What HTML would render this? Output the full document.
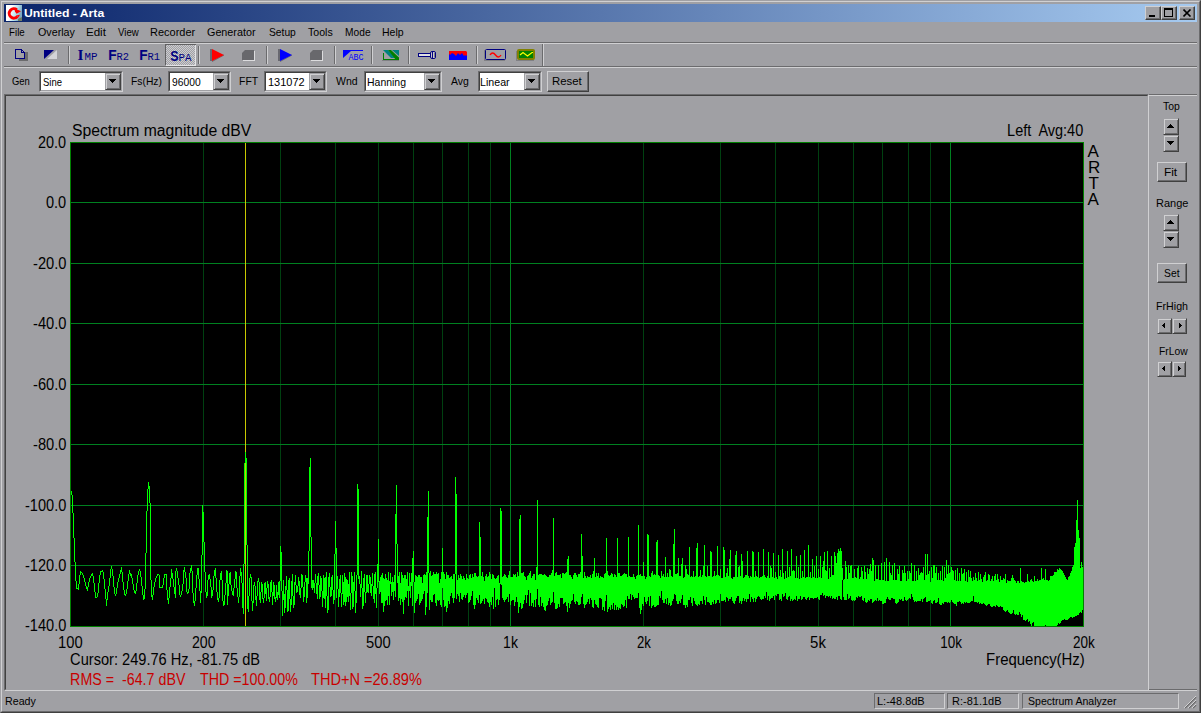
<!DOCTYPE html>
<html><head><meta charset="utf-8"><title>Untitled - Arta</title>
<style>
html,body{margin:0;padding:0}
body{width:1201px;height:713px;background:#a0a0a4;overflow:hidden;position:relative;font-family:"Liberation Sans",sans-serif;font-size:11px;color:#000}
.a{position:absolute}
.t{position:absolute;white-space:pre;line-height:13px;height:13px}
.p{position:absolute;white-space:pre;font-size:15px;line-height:17px;height:17px}
.hl{background:#d0d0d2}.sh{background:#6b6b6d}.dk{background:#404040}
.btn{position:absolute;box-sizing:border-box;background:#a0a0a4;border:1px solid;border-color:#d0d0d2 #404040 #404040 #d0d0d2;box-shadow:inset -1px -1px 0 #6b6b6d}
.sb{position:absolute;box-sizing:border-box;background:#a0a0a4;border:1px solid;border-color:#a0a0a4 #404040 #404040 #a0a0a4;box-shadow:inset 1px 1px 0 #d0d0d2,inset -1px -1px 0 #6b6b6d}
.sb svg,.btn svg{position:absolute;display:block}
.combo{position:absolute;box-sizing:border-box;height:21px;top:71px;border:1px solid;border-color:#6b6b6d #d0d0d2 #d0d0d2 #6b6b6d;background:#fff}
.combo:before{content:"";position:absolute;left:0;top:0;right:0;bottom:0;border:1px solid;border-color:#404040 #a0a0a4 #a0a0a4 #404040}
.cb{right:1px;top:1px;width:16px;height:17px}
.vsep{position:absolute;top:46px;width:1px;height:18px;background:#6b6b6d;box-shadow:1px 0 0 #d0d0d2}
.pane{position:absolute;top:693px;height:16px;box-sizing:border-box;border:1px solid;border-color:#6b6b6d #d0d0d2 #d0d0d2 #6b6b6d}
</style></head><body>
<!-- window frame -->
<div class="a" style="left:0;top:0;width:1201px;height:713px;box-sizing:border-box;border:1px solid;border-color:#a0a0a4 #404040 #404040 #a0a0a4"></div>
<div class="a" style="left:1px;top:1px;width:1199px;height:711px;box-sizing:border-box;border:1px solid;border-color:#d0d0d2 #6b6b6d #6b6b6d #d0d0d2"></div>
<!-- title bar -->
<div class="a" style="left:4px;top:4px;width:1193px;height:18px;background:linear-gradient(90deg,#0a246a,#a6caf0)"></div>
<svg class="a" style="left:6px;top:5px" width="16" height="16" viewBox="0 0 16 16"><defs><linearGradient id="ig" x1="0" y1="0" x2="1" y2="0.300"><stop offset="0.350" stop-color="#fff"/><stop offset="0.700" stop-color="#b8e4f0"/><stop offset="1" stop-color="#7fa8c0"/></linearGradient></defs><rect width="16" height="16" fill="url(#ig)"/><path d="M12 14l4-2v4h-4z" fill="#6a6a40" opacity="0.700"/><path d="M10.800 4.700A4.700 4.700 0 1 0 11.400 11.600" stroke="#f00" stroke-width="3" fill="none"/><path d="M8.500 3.200L15 6.300 10.500 8.800 9 6.500z" fill="#f00"/><path d="M10 10.500l4-.8-1.500 2.500z" fill="#f00"/></svg>

<div class="btn" style="left:1145px;top:6px;width:16px;height:14px"><div class="a" style="left:3px;top:8px;width:6px;height:2px;background:#000"></div></div>
<div class="btn" style="left:1161px;top:6px;width:16px;height:14px"><div class="a" style="left:2px;top:1px;width:9px;height:9px;box-sizing:border-box;border:1px solid #000;border-top-width:2px"></div></div>
<div class="btn" style="left:1179px;top:6px;width:16px;height:14px"><svg class="a" style="left:3px;top:2px" width="9" height="8" viewBox="0 0 9 8"><path d="M0.5 0.5L7.5 7.500M7.500 0.500L0.500 7.500" stroke="#000" stroke-width="1.6" fill="none"/></svg></div>
<!-- menu -->










<div class="a sh" style="left:4px;top:42px;width:1193px;height:1px"></div>
<div class="a hl" style="left:4px;top:43px;width:1193px;height:1px"></div>
<!-- toolbar 1 -->
<div class="a sh" style="left:4px;top:66px;width:1193px;height:1px"></div>
<div class="a hl" style="left:4px;top:67px;width:1193px;height:1px"></div>
<div class="vsep" style="left:68px"></div>
<div class="vsep" style="left:198px"></div>
<div class="vsep" style="left:266px"></div>
<div class="vsep" style="left:334px"></div>
<div class="vsep" style="left:371px"></div>
<div class="vsep" style="left:408px"></div>
<div class="vsep" style="left:476px"></div>
<div class="vsep" style="left:542px;top:44px;height:22px"></div>
<svg class="a" style="left:4px;top:44px" width="560" height="22" viewBox="4 44 560 22" shape-rendering="crispEdges">
<defs><pattern id="dith" width="2" height="2" patternUnits="userSpaceOnUse"><rect width="2" height="2" fill="#a0a0a4"/><rect width="1" height="1" fill="#ccccd0"/><rect x="1" y="1" width="1" height="1" fill="#ccccd0"/></pattern></defs>
<!-- new doc -->
<rect x="19" y="52" width="9" height="9" fill="#6b6b6d"/>
<path d="M15.500 49.500h6l3 3v6h-9z" fill="#a0a0a4" stroke="#000080"/><path d="M21.500 49.500v3h3" fill="none" stroke="#000080"/>
<!-- triangles -->
<path d="M44 50h10l-10 9z" fill="#000080" shape-rendering="auto"/><path d="M57 50v9h-10z" fill="#d4d4d8" shape-rendering="auto"/>
<!-- pressed SPA -->
<rect x="166" y="45" width="29" height="20" fill="url(#dith)"/>
<path d="M165.500 65v-20.500h30" fill="none" stroke="#606062"/><path d="M166 65.500h29.500v-21" fill="none" stroke="#e4e4e6"/>
<!-- red play -->
<path d="M210 49h2v12h-2z" fill="#686870"/><path d="M212 61v1l12-6.500v-1z" fill="#686870" shape-rendering="auto"/><path d="M212 49l12 6-12 6z" fill="#f00" shape-rendering="auto"/>
<!-- stop -->
<path d="M245 50h9v10h-12v-7z" fill="#68686c" shape-rendering="auto"/><path d="M254.500 51v9.500h-12" fill="none" stroke="#dcdcde"/>
<!-- blue play -->
<path d="M278 49h2v12h-2z" fill="#686870"/><path d="M280 61v1l12-6.500v-1z" fill="#686870" shape-rendering="auto"/><path d="M280 49l12 6-12 6z" fill="#00f" shape-rendering="auto"/>
<!-- stop2 -->
<path d="M313 50h9v10h-12v-7z" fill="#68686c" shape-rendering="auto"/><path d="M322.500 51v9.500h-12" fill="none" stroke="#dcdcde"/>
<!-- ABC -->
<path d="M343 50h20v1h-12l-8 7z" fill="#00f" shape-rendering="auto"/>
<text x="348.500" y="60" font-family="Liberation Mono, monospace" font-size="8.500" fill="#00f" textLength="15" lengthAdjust="spacingAndGlyphs">ABC</text>
<!-- green/teal -->
<path d="M382 60.500h17" stroke="#808084"/>
<path d="M383 50h5l8 8h-5z" fill="#008080" shape-rendering="auto"/><path d="M392 50h7v6z" fill="#008080" shape-rendering="auto"/>
<path d="M388 50h3l8 7.500v2.500h-3z" fill="#008000" shape-rendering="auto"/>
<path d="M383.500 53v6.500h15.500" fill="none" stroke="#008000"/>
<!-- flashlight -->
<path d="M418.500 53.500h12v3h-12z" fill="#e0e0e0" stroke="#000080"/><rect x="430.500" y="51.500" width="5" height="7" rx="1.500" fill="#c8c8cc" stroke="#000080" shape-rendering="auto"/><path d="M432.500 52v6" stroke="#000080"/><path d="M434 53v4" stroke="#808084"/>
<!-- red/blue -->
<rect x="449" y="52" width="18" height="8" fill="#00f"/><path d="M450 51h16l1 1v3l-1 1-1-1-1 1-2-3-2 2-2-2-2 3-2-2-2-1-2 2-1-1v-3z" fill="#f00" shape-rendering="auto"/>
<!-- scope 1 -->
<path d="M484.500 50v10.500h20" fill="none" stroke="#808084"/>
<rect x="485.500" y="49.500" width="20" height="10" rx="1" fill="#a0a0a4" stroke="#000080" shape-rendering="auto"/><path d="M490 55q2.500-4 5.500 0t5.500 0" fill="none" stroke="#f00" stroke-width="1.400" shape-rendering="auto"/>
<!-- scope 2 -->
<path d="M516.500 51v9.500h17" fill="none" stroke="#808084"/>
<rect x="517" y="49" width="18" height="11" rx="2" fill="#808000" shape-rendering="auto"/><rect x="519" y="51" width="14" height="7" fill="#008000"/><path d="M520 55l3-2.500 4.500 3.500 4.500-3.500 1 0" fill="none" stroke="#ff0" stroke-width="1.200" shape-rendering="auto"/>
<!-- text icons -->
<g fill="#000080" font-weight="bold" shape-rendering="auto">
<text x="77.500" y="60" font-family="Liberation Serif, serif" font-size="15.500" textLength="6" lengthAdjust="spacingAndGlyphs">I</text>
<text x="108.200" y="60" font-family="Liberation Sans, sans-serif" font-size="15.300" textLength="8.400" lengthAdjust="spacingAndGlyphs">F</text>
<text x="139.200" y="60" font-family="Liberation Sans, sans-serif" font-size="15.300" textLength="8.400" lengthAdjust="spacingAndGlyphs">F</text>
<text x="170.300" y="61" font-family="Liberation Sans, sans-serif" font-size="15.300" textLength="8.300" lengthAdjust="spacingAndGlyphs">S</text>
</g>
<g fill="#000080" font-family="Liberation Mono, monospace" font-size="10" shape-rendering="auto">
<text x="84.500" y="60" textLength="13" lengthAdjust="spacingAndGlyphs">MP</text>
<text x="116.500" y="60" textLength="12.500" lengthAdjust="spacingAndGlyphs">R2</text>
<text x="147.500" y="60" textLength="12.500" lengthAdjust="spacingAndGlyphs">R1</text>
<text x="178.500" y="61" textLength="13" lengthAdjust="spacingAndGlyphs">PA</text>
</g>
</svg>
<!-- toolbar 2 -->

<div class="combo" style="left:39px;width:84px"><div class="sb cb"><svg width="7" height="4" viewBox="0 0 7 4" shape-rendering="crispEdges" style="left:3px;top:5px"><path d="M0 0h7v1h-7zM1 1h5v1h-5zM2 2h3v1h-3zM3 3h1v1h-1z"/></svg></div></div>

<div class="combo" style="left:168px;width:63px"><div class="sb cb"><svg width="7" height="4" viewBox="0 0 7 4" shape-rendering="crispEdges" style="left:3px;top:5px"><path d="M0 0h7v1h-7zM1 1h5v1h-5zM2 2h3v1h-3zM3 3h1v1h-1z"/></svg></div></div>

<div class="combo" style="left:264px;width:63px"><div class="sb cb"><svg width="7" height="4" viewBox="0 0 7 4" shape-rendering="crispEdges" style="left:3px;top:5px"><path d="M0 0h7v1h-7zM1 1h5v1h-5zM2 2h3v1h-3zM3 3h1v1h-1z"/></svg></div></div>

<div class="combo" style="left:364px;width:78px"><div class="sb cb"><svg width="7" height="4" viewBox="0 0 7 4" shape-rendering="crispEdges" style="left:3px;top:5px"><path d="M0 0h7v1h-7zM1 1h5v1h-5zM2 2h3v1h-3zM3 3h1v1h-1z"/></svg></div></div>

<div class="combo" style="left:478px;width:64px"><div class="sb cb"><svg width="7" height="4" viewBox="0 0 7 4" shape-rendering="crispEdges" style="left:3px;top:5px"><path d="M0 0h7v1h-7zM1 1h5v1h-5zM2 2h3v1h-3zM3 3h1v1h-1z"/></svg></div></div>
<div class="btn" style="left:547px;top:71px;width:42px;height:21px"></div>
<!-- client area -->
<div class="a" style="left:4px;top:94px;width:1145px;height:597px;box-sizing:border-box;border:1px solid;border-color:#6b6b6d #d0d0d2 #d0d0d2 #6b6b6d"></div>
<div class="a" style="left:5px;top:95px;width:1143px;height:595px;box-sizing:border-box;border:1px solid;border-color:#404040 #a0a0a4 #a0a0a4 #404040"></div>
<div class="a sh" style="left:1149px;top:94px;width:48px;height:1px"></div><div class="a hl" style="left:1149px;top:95px;width:48px;height:1px"></div>
<div class="a sh" style="left:1149px;top:689px;width:48px;height:1px"></div>
<div class="a hl" style="left:1149px;top:690px;width:48px;height:1px"></div>
<!-- plot -->
<svg class="a" style="left:0;top:0" width="1201" height="713" viewBox="0 0 1201 713" shape-rendering="crispEdges">
<rect x="70.500" y="142.500" width="1013" height="484" fill="#000" stroke="#008000"/>
<path d="M203.5 143V626M280.5 143V626M335.5 143V626M378.5 143V626M413.5 143V626M442.5 143V626M468.5 143V626M490.5 143V626M643.5 143V626M720.5 143V626M775.5 143V626M818.5 143V626M853.5 143V626M882.5 143V626M908.5 143V626M930.5 143V626" stroke="#004010" fill="none"/>
<path d="M71 202.5H1083M71 263.5H1083M71 323.5H1083M71 384.5H1083M71 444.5H1083M71 505.5H1083M71 565.5H1083M510.5 143V626M950.5 143V626" stroke="#008020" fill="none"/>
<path d="M245.500 143V626" stroke="#c8c800" fill="none"/>
<path d="M71.5 491V495M72.5 495V513M73.5 513V538M74.5 538V562M75.5 562V581M76.5 581V589M77.5 588V589M78.5 584V590M79.5 575V584M80.5 571V575M81.5 572V573M82.5 573V575M83.5 575V578M84.5 578V582M85.5 582V586M86.5 586V589M87.5 587V591M88.5 582V587M89.5 578V582M90.5 576V578M91.5 574V576M92.5 573V576M93.5 576V583M94.5 583V592M95.5 592V598M96.5 597V598M97.5 593V597M98.5 583V593M99.5 575V583M100.5 571V575M101.5 571V572M102.5 570V572M103.5 572V579M104.5 579V589M105.5 589V599M106.5 599V606M107.5 592V600M108.5 586V592M109.5 578V586M110.5 569V578M111.5 566V569M112.5 569V576M113.5 576V587M114.5 587V594M115.5 594V596M116.5 588V594M117.5 582V588M118.5 578V582M119.5 574V578M120.5 570V574M121.5 567V572M122.5 572V582M123.5 582V590M124.5 590V595M125.5 594V596M126.5 589V594M127.5 581V589M128.5 574V581M129.5 570V574M130.5 573V576M131.5 574V578M132.5 578V584M133.5 584V590M134.5 590V593M135.5 591V594M136.5 583V591M137.5 575V583M138.5 571V575M139.5 569V571M140.5 571V577M141.5 577V586M142.5 586V595M143.5 595V600M144.5 589V599M145.5 553V589M146.5 511V553M147.5 489V511M148.5 482V489M149.5 486V503M150.5 503V580M151.5 580V597M152.5 595V600M153.5 587V595M154.5 582V587M155.5 578V582M156.5 576V578M157.5 574V576M158.5 574V575M159.5 575V588M160.5 587V588M161.5 587V588M162.5 585V588M163.5 578V585M164.5 574V578M165.5 574V575M166.5 574V590M167.5 590V600M168.5 598V604M169.5 587V598M170.5 578V587M171.5 569V578M172.5 573V579M173.5 579V587M174.5 587V594M175.5 571V598M176.5 568V571M177.5 571V578M178.5 578V585M179.5 585V595M180.5 595V597M181.5 591V595M182.5 584V591M183.5 570V584M184.5 567V572M185.5 572V578M186.5 578V592M187.5 592V594M188.5 589V593M189.5 573V589M190.5 568V573M191.5 565V571M192.5 571V593M193.5 593V603M194.5 601V606M195.5 588V601M196.5 575V588M197.5 568V575M198.5 568V579M199.5 579V591M200.5 591V603M201.5 555V593M202.5 505V555M203.5 512V542M204.5 542V572M205.5 572V592M206.5 592V598M207.5 580V596M208.5 575V580M209.5 574V579M210.5 579V587M211.5 587V598M212.5 590V596M213.5 576V590M214.5 570V576M215.5 568V578M216.5 578V592M217.5 592V600M218.5 598V602M219.5 580V598M220.5 573V580M221.5 571V580M222.5 580V601M223.5 601V606M224.5 595V605M225.5 583V595M226.5 570V583M227.5 571V605M228.5 584V596M229.5 573V584M230.5 572V585M231.5 585V591M232.5 591V595M233.5 588V596M234.5 579V588M235.5 571V579M236.5 572V588M237.5 588V597M238.5 597V603M239.5 576V597M240.5 568V576M241.5 572V583M242.5 583V608M243.5 564V614M244.5 463V564M245.5 452V463M246.5 458V545M247.5 545V609M248.5 596V612M249.5 578V596M250.5 574V578M251.5 577V601M252.5 601V611M253.5 585V603M254.5 582V586M255.5 586V600M256.5 596V606M257.5 581V596M258.5 578V582M259.5 582V600M260.5 592V603M261.5 582V592M262.5 584V599M263.5 598V603M264.5 583V598M265.5 582V594M266.5 588V601M267.5 581V588M268.5 584V599M269.5 597V602M270.5 582V597M271.5 580V592M272.5 592V605M273.5 582V596M274.5 585V599M275.5 597V602M276.5 585V598M277.5 592V600M278.5 582V595M279.5 581V598M280.5 546V581M281.5 552V591M282.5 591V616M283.5 580V600M284.5 594V613M285.5 586V608M286.5 576V590M287.5 590V612M288.5 580V611M289.5 578V599M290.5 599V612M291.5 581V605M292.5 574V596M293.5 596V608M294.5 582V605M295.5 575V585M296.5 585V593M297.5 586V592M298.5 577V586M299.5 581V595M300.5 588V598M301.5 574V588M302.5 575V587M303.5 587V602M304.5 582V597M305.5 575V582M306.5 578V603M307.5 578V598M308.5 551V584M309.5 467V551M310.5 458V537M311.5 537V588M312.5 580V590M313.5 580V588M314.5 583V593M315.5 574V583M316.5 583V594M317.5 576V599M318.5 573V585M319.5 585V599M320.5 576V597M321.5 578V591M322.5 591V607M323.5 575V598M324.5 578V599M325.5 577V608M326.5 572V596M327.5 596V613M328.5 577V610M329.5 573V587M330.5 587V597M331.5 577V596M332.5 575V590M333.5 590V604M334.5 554V600M335.5 521V554M336.5 548V598M337.5 576V589M338.5 589V607M339.5 579V597M340.5 575V593M341.5 593V607M342.5 575V594M343.5 582V605M344.5 573V602M345.5 577V606M346.5 579V602M347.5 580V597M348.5 584V602M349.5 572V596M350.5 593V610M351.5 572V593M352.5 576V609M353.5 582V607M354.5 572V591M355.5 591V613M356.5 575V603M357.5 484V575M358.5 489V579M359.5 576V584M360.5 584V597M361.5 571V588M362.5 588V609M363.5 578V606M364.5 574V592M365.5 592V603M366.5 575V593M367.5 575V592M368.5 584V593M369.5 575V584M370.5 577V593M371.5 584V596M372.5 573V586M373.5 586V599M374.5 574V603M375.5 572V594M376.5 588V608M377.5 564V588M378.5 539V582M379.5 581V594M380.5 577V592M381.5 575V603M382.5 573V603M383.5 578V612M384.5 579V606M385.5 574V601M386.5 578V600M387.5 580V605M388.5 572V596M389.5 581V605M390.5 573V584M391.5 582V596M392.5 577V592M393.5 582V600M394.5 575V591M395.5 514V597M396.5 485V544M397.5 544V583M398.5 576V601M399.5 572V598M400.5 583V605M401.5 572V599M402.5 575V602M403.5 578V614M404.5 575V600M405.5 575V597M406.5 579V598M407.5 572V591M408.5 586V606M409.5 573V591M410.5 582V598M411.5 573V586M412.5 558V606M413.5 551V582M414.5 582V613M415.5 575V603M416.5 576V601M417.5 577V599M418.5 575V594M419.5 575V605M420.5 577V603M421.5 577V601M422.5 583V599M423.5 575V594M424.5 574V591M425.5 575V615M426.5 572V607M427.5 517V593M428.5 491V573M429.5 573V610M430.5 571V600M431.5 576V602M432.5 575V602M433.5 572V595M434.5 574V594M435.5 574V603M436.5 572V606M437.5 574V600M438.5 573V601M439.5 583V600M440.5 579V605M441.5 572V607M442.5 548V588M443.5 572V600M444.5 574V607M445.5 579V606M446.5 572V612M447.5 575V608M448.5 575V601M449.5 578V604M450.5 577V596M451.5 576V593M452.5 579V598M453.5 574V603M454.5 574V598M455.5 477V574M456.5 494V599M457.5 580V594M458.5 575V596M459.5 578V602M460.5 574V593M461.5 576V599M462.5 579V600M463.5 576V597M464.5 578V595M465.5 580V598M466.5 574V595M467.5 578V593M468.5 579V603M469.5 575V602M470.5 574V600M471.5 578V596M472.5 574V591M473.5 577V605M474.5 573V609M475.5 573V605M476.5 576V598M477.5 577V600M478.5 576V603M479.5 522V595M480.5 537V604M481.5 576V603M482.5 572V601M483.5 577V599M484.5 581V604M485.5 576V598M486.5 574V599M487.5 577V602M488.5 576V603M489.5 572V607M490.5 574V602M491.5 579V605M492.5 574V597M493.5 575V609M494.5 578V588M495.5 579V607M496.5 578V600M497.5 576V599M498.5 575V605M499.5 583V600M500.5 508V584M501.5 511V585M502.5 577V598M503.5 576V600M504.5 574V602M505.5 575V600M506.5 577V599M507.5 578V597M508.5 575V602M509.5 571V594M510.5 577V605M511.5 577V601M512.5 577V600M513.5 574V600M514.5 575V606M515.5 574V602M516.5 577V597M517.5 572V602M518.5 576V613M519.5 519V607M520.5 515V603M521.5 573V609M522.5 573V608M523.5 572V604M524.5 576V600M525.5 577V595M526.5 580V603M527.5 576V595M528.5 575V590M529.5 573V606M530.5 571V593M531.5 578V606M532.5 576V603M533.5 574V607M534.5 574V600M535.5 580V607M536.5 567V599M537.5 500V589M538.5 575V605M539.5 574V607M540.5 574V597M541.5 574V606M542.5 575V603M543.5 575V607M544.5 574V610M545.5 575V611M546.5 576V606M547.5 577V605M548.5 577V601M549.5 575V598M550.5 575V605M551.5 573V603M552.5 570V602M553.5 518V592M554.5 576V603M555.5 573V609M556.5 572V609M557.5 575V608M558.5 575V604M559.5 575V607M560.5 574V598M561.5 578V598M562.5 573V598M563.5 573V604M564.5 574V603M565.5 573V602M566.5 572V606M567.5 559V612M568.5 556V603M569.5 575V608M570.5 575V604M571.5 577V601M572.5 579V600M573.5 575V594M574.5 573V602M575.5 573V604M576.5 575V601M577.5 577V602M578.5 574V605M579.5 574V605M580.5 572V604M581.5 534V597M582.5 556V594M583.5 578V604M584.5 572V608M585.5 576V605M586.5 578V604M587.5 576V602M588.5 577V599M589.5 577V604M590.5 575V598M591.5 578V600M592.5 574V607M593.5 571V608M594.5 558V600M595.5 577V604M596.5 573V605M597.5 576V607M598.5 573V608M599.5 578V598M600.5 576V598M601.5 577V599M602.5 577V610M603.5 578V607M604.5 574V611M605.5 573V601M606.5 538V595M607.5 571V612M608.5 575V609M609.5 576V607M610.5 575V610M611.5 573V605M612.5 574V609M613.5 577V603M614.5 574V610M615.5 575V605M616.5 577V610M617.5 538V607M618.5 573V610M619.5 573V608M620.5 576V609M621.5 576V604M622.5 575V605M623.5 574V607M624.5 573V606M625.5 574V600M626.5 574V608M627.5 577V596M628.5 537V599M629.5 576V599M630.5 577V594M631.5 577V600M632.5 577V595M633.5 574V597M634.5 577V599M635.5 579V598M636.5 576V598M637.5 575V598M638.5 525V593M639.5 575V608M640.5 574V614M641.5 576V610M642.5 576V604M643.5 562V606M644.5 576V597M645.5 579V602M646.5 577V604M647.5 534V601M648.5 535V597M649.5 576V606M650.5 577V596M651.5 573V608M652.5 571V606M653.5 575V605M654.5 574V607M655.5 575V607M656.5 542V606M657.5 540V605M658.5 575V605M659.5 576V596M660.5 578V598M661.5 571V591M662.5 576V600M663.5 574V603M664.5 577V603M665.5 557V599M666.5 577V604M667.5 573V598M668.5 577V605M669.5 569V603M670.5 570V606M671.5 576V605M672.5 577V601M673.5 544V599M674.5 529V594M675.5 574V595M676.5 574V601M677.5 573V604M678.5 558V604M679.5 576V601M680.5 576V603M681.5 564V599M682.5 558V595M683.5 578V605M684.5 577V605M685.5 565V608M686.5 569V605M687.5 574V607M688.5 575V600M689.5 547V600M690.5 577V597M691.5 576V603M692.5 577V606M693.5 571V598M694.5 577V601M695.5 576V604M696.5 548V605M697.5 543V606M698.5 577V604M699.5 576V605M700.5 570V601M701.5 577V601M702.5 575V604M703.5 566V596M704.5 545V600M705.5 576V605M706.5 577V597M707.5 566V602M708.5 576V602M709.5 576V603M710.5 551V605M711.5 552V605M712.5 577V602M713.5 576V604M714.5 571V600M715.5 576V604M716.5 575V603M717.5 546V600M718.5 575V600M719.5 576V603M720.5 569V594M721.5 578V601M722.5 578V601M723.5 547V601M724.5 550V600M725.5 577V602M726.5 573V597M727.5 568V598M728.5 576V601M729.5 559V599M730.5 550V599M731.5 578V597M732.5 579V601M733.5 577V603M734.5 577V604M735.5 555V601M736.5 551V598M737.5 577V596M738.5 567V596M739.5 566V603M740.5 576V601M741.5 554V604M742.5 561V601M743.5 578V598M744.5 577V601M745.5 575V599M746.5 575V602M747.5 551V599M748.5 576V599M749.5 578V594M750.5 576V602M751.5 577V597M752.5 551V599M753.5 552V602M754.5 577V598M755.5 571V602M756.5 576V599M757.5 577V597M758.5 552V596M759.5 578V597M760.5 577V599M761.5 577V600M762.5 576V599M763.5 549V599M764.5 575V596M765.5 577V598M766.5 578V592M767.5 576V600M768.5 552V596M769.5 578V601M770.5 566V599M771.5 568V598M772.5 577V598M773.5 553V596M774.5 578V600M775.5 572V595M776.5 577V596M777.5 579V594M778.5 555V594M779.5 576V600M780.5 570V599M781.5 577V601M782.5 549V594M783.5 573V597M784.5 579V596M785.5 571V593M786.5 578V599M787.5 551V600M788.5 577V597M789.5 567V596M790.5 576V601M791.5 549V599M792.5 571V601M793.5 570V600M794.5 571V599M795.5 578V600M796.5 556V596M797.5 578V601M798.5 567V599M799.5 579V599M800.5 555V596M801.5 578V600M802.5 571V599M803.5 577V597M804.5 550V597M805.5 578V599M806.5 577V600M807.5 577V598M808.5 545V597M809.5 577V600M810.5 572V598M811.5 578V598M812.5 559V598M813.5 577V599M814.5 566V598M815.5 578V598M816.5 556V598M817.5 578V597M818.5 569V599M819.5 577V600M820.5 556V595M821.5 578V595M822.5 567V593M823.5 561V596M824.5 552V595M825.5 570V598M826.5 571V596M827.5 551V596M828.5 579V597M829.5 568V596M830.5 577V598M831.5 556V596M832.5 575V599M833.5 575V598M834.5 552V599M835.5 556V599M836.5 563V597M837.5 553V600M838.5 549V596M839.5 551V596M840.5 548V599M841.5 551V600M842.5 568V580M843.5 580V597M844.5 579V600M845.5 561V600M846.5 567V600M847.5 579V594M848.5 565V599M849.5 573V598M850.5 566V596M851.5 565V600M852.5 578V601M853.5 578V600M854.5 569V601M855.5 577V600M856.5 578V597M857.5 568V598M858.5 566V596M859.5 579V597M860.5 577V597M861.5 567V596M862.5 571V600M863.5 579V601M864.5 566V598M865.5 572V602M866.5 579V603M867.5 568V602M868.5 574V600M869.5 569V601M870.5 564V599M871.5 571V599M872.5 558V603M873.5 560V602M874.5 581V601M875.5 565V600M876.5 579V601M877.5 579V598M878.5 565V601M879.5 580V600M880.5 580V601M881.5 563V601M882.5 580V604M883.5 580V604M884.5 562V603M885.5 581V603M886.5 558V599M887.5 581V597M888.5 581V599M889.5 562V600M890.5 573V600M891.5 575V598M892.5 565V598M893.5 580V599M894.5 563V599M895.5 580V603M896.5 580V604M897.5 569V603M898.5 574V602M899.5 566V599M900.5 581V600M901.5 581V599M902.5 570V601M903.5 573V601M904.5 566V597M905.5 573V600M906.5 581V601M907.5 571V600M908.5 579V599M909.5 571V598M910.5 573V599M911.5 563V594M912.5 581V597M913.5 581V600M914.5 565V602M915.5 581V601M916.5 571V602M917.5 580V601M918.5 568V601M919.5 575V601M920.5 573V601M921.5 572V599M922.5 573V602M923.5 567V599M924.5 580V598M925.5 554V597M926.5 575V602M927.5 554V602M928.5 574V601M929.5 571V601M930.5 582V600M931.5 567V603M932.5 578V604M933.5 565V601M934.5 565V600M935.5 573V603M936.5 567V603M937.5 580V602M938.5 573V598M939.5 580V604M940.5 571V605M941.5 580V605M942.5 566V603M943.5 581V604M944.5 567V602M945.5 578V602M946.5 560V602M947.5 574V603M948.5 565V602M949.5 573V603M950.5 572V602M951.5 567V600M952.5 570V602M953.5 571V603M954.5 580V604M955.5 570V604M956.5 581V606M957.5 568V602M958.5 581V602M959.5 573V601M960.5 581V602M961.5 568V604M962.5 574V603M963.5 573V604M964.5 569V602M965.5 581V603M966.5 572V602M967.5 582V603M968.5 570V603M969.5 577V603M970.5 571V602M971.5 578V601M972.5 581V601M973.5 577V596M974.5 580V602M975.5 573V602M976.5 578V602M977.5 581V603M978.5 572V602M979.5 580V604M980.5 574V603M981.5 579V604M982.5 582V604M983.5 577V603M984.5 575V604M985.5 572V605M986.5 581V606M987.5 580V605M988.5 574V604M989.5 575V604M990.5 581V606M991.5 579V607M992.5 576V607M993.5 581V606M994.5 576V606M995.5 574V607M996.5 580V605M997.5 574V606M998.5 579V607M999.5 582V607M1000.5 576V606M1001.5 580V607M1002.5 580V607M1003.5 578V610M1004.5 579V611M1005.5 574V612M1006.5 583V611M1007.5 580V610M1008.5 581V612M1009.5 581V613M1010.5 581V614M1011.5 578V614M1012.5 575V613M1013.5 578V610M1014.5 580V614M1015.5 581V615M1016.5 583V614M1017.5 581V615M1018.5 581V615M1019.5 583V612M1020.5 568V614M1021.5 581V617M1022.5 582V615M1023.5 582V620M1024.5 583V620M1025.5 582V621M1026.5 582V620M1027.5 574V619M1028.5 581V622M1029.5 582V621M1030.5 580V624M1031.5 579V626M1032.5 581V623M1033.5 582V622M1034.5 576V626M1035.5 581V626M1036.5 581V626M1037.5 579V626M1038.5 581V626M1039.5 580V626M1040.5 580V626M1041.5 568V626M1042.5 579V626M1043.5 578V626M1044.5 580V626M1045.5 569V625M1046.5 580V626M1047.5 580V626M1048.5 581V626M1049.5 580V626M1050.5 576V626M1051.5 576V626M1052.5 576V626M1053.5 575V626M1054.5 572V626M1055.5 572V626M1056.5 572V626M1057.5 569V625M1058.5 570V623M1059.5 568V624M1060.5 569V623M1061.5 570V621M1062.5 571V620M1063.5 573V620M1064.5 575V619M1065.5 577V620M1066.5 579V620M1067.5 580V620M1068.5 577V619M1069.5 576V618M1070.5 573V617M1071.5 571V617M1072.5 567V618M1073.5 565V617M1074.5 547V617M1075.5 543V616M1076.5 520V616M1077.5 500V615M1078.5 530V615M1079.5 538V613M1080.5 568V612M1081.5 562V613M1082.5 567V610" stroke="#00ff00" fill="none"/>
</svg>
<svg class="a" style="left:0;top:0" width="1201" height="713" viewBox="0 0 1201 713" font-family="Liberation Sans, sans-serif" font-size="16" fill="#000">
<text x="72.0" y="136" textLength="179.3" lengthAdjust="spacingAndGlyphs" >Spectrum magnitude dBV</text>
<text x="1007.1" y="136" textLength="76.1" lengthAdjust="spacingAndGlyphs" xml:space="preserve">Left  Avg:40</text>
<text x="38.0" y="148" textLength="28.1" lengthAdjust="spacingAndGlyphs" >20.0</text>
<text x="46.0" y="208" textLength="20.2" lengthAdjust="spacingAndGlyphs" >0.0</text>
<text x="33.0" y="269" textLength="33.4" lengthAdjust="spacingAndGlyphs" >-20.0</text>
<text x="33.0" y="329" textLength="33.4" lengthAdjust="spacingAndGlyphs" >-40.0</text>
<text x="33.0" y="390" textLength="33.4" lengthAdjust="spacingAndGlyphs" >-60.0</text>
<text x="33.0" y="450" textLength="33.4" lengthAdjust="spacingAndGlyphs" >-80.0</text>
<text x="25.0" y="511" textLength="41.3" lengthAdjust="spacingAndGlyphs" >-100.0</text>
<text x="25.0" y="571" textLength="41.3" lengthAdjust="spacingAndGlyphs" >-120.0</text>
<text x="25.0" y="631" textLength="41.3" lengthAdjust="spacingAndGlyphs" >-140.0</text>
<text x="58.1" y="648" textLength="24.6" lengthAdjust="spacingAndGlyphs" >100</text>
<text x="192.0" y="648" textLength="23.6" lengthAdjust="spacingAndGlyphs" >200</text>
<text x="366.1" y="648" textLength="24.6" lengthAdjust="spacingAndGlyphs" >500</text>
<text x="503.1" y="648" textLength="14.8" lengthAdjust="spacingAndGlyphs" >1k</text>
<text x="637.0" y="648" textLength="13.9" lengthAdjust="spacingAndGlyphs" >2k</text>
<text x="810.1" y="648" textLength="15.8" lengthAdjust="spacingAndGlyphs" >5k</text>
<text x="940.2" y="648" textLength="21.7" lengthAdjust="spacingAndGlyphs" >10k</text>
<text x="1073.0" y="648" textLength="21.8" lengthAdjust="spacingAndGlyphs" >20k</text>
<text x="70.1" y="665" textLength="190.0" lengthAdjust="spacingAndGlyphs" >Cursor: 249.76 Hz, -81.75 dB</text>
<text x="986.1" y="665" textLength="98.7" lengthAdjust="spacingAndGlyphs" >Frequency(Hz)</text>
<text x="70.1" y="685" textLength="115.3" lengthAdjust="spacingAndGlyphs" fill="#c80000" xml:space="preserve">RMS =  -64.7 dBV</text>
<text x="200.0" y="685" textLength="97.9" lengthAdjust="spacingAndGlyphs" fill="#c80000">THD =100.00%</text>
<text x="311.0" y="685" textLength="110.9" lengthAdjust="spacingAndGlyphs" fill="#c80000">THD+N =26.89%</text>

<g font-size="17"><text x="1087.600" y="156.800">A</text>
<text x="1088" y="172.600">R</text>
<text x="1088.400" y="188.600">T</text>
<text x="1087.600" y="204.800">A</text></g>
</svg>
<!-- right panel -->
<div class="sb" style="left:1163px;top:118px;width:16px;height:17px"><svg width="7" height="4" viewBox="0 0 7 4" shape-rendering="crispEdges" style="left:3px;top:5px"><path d="M3 0h1v1h-1zM2 1h3v1h-3zM1 2h5v1h-5zM0 3h7v1h-7z"/></svg></div>
<div class="sb" style="left:1163px;top:135px;width:16px;height:17px"><svg width="7" height="4" viewBox="0 0 7 4" shape-rendering="crispEdges" style="left:3px;top:5px"><path d="M0 0h7v1h-7zM1 1h5v1h-5zM2 2h3v1h-3zM3 3h1v1h-1z"/></svg></div>
<div class="btn" style="left:1157px;top:162px;width:30px;height:20px"></div>
<div class="sb" style="left:1163px;top:214px;width:16px;height:17px"><svg width="7" height="4" viewBox="0 0 7 4" shape-rendering="crispEdges" style="left:3px;top:5px"><path d="M3 0h1v1h-1zM2 1h3v1h-3zM1 2h5v1h-5zM0 3h7v1h-7z"/></svg></div>
<div class="sb" style="left:1163px;top:231px;width:16px;height:17px"><svg width="7" height="4" viewBox="0 0 7 4" shape-rendering="crispEdges" style="left:3px;top:5px"><path d="M0 0h7v1h-7zM1 1h5v1h-5zM2 2h3v1h-3zM3 3h1v1h-1z"/></svg></div>
<div class="btn" style="left:1157px;top:263px;width:30px;height:20px"></div>
<div class="sb" style="left:1157px;top:318px;width:15px;height:16px"><svg width="3" height="5" viewBox="0 0 3 5" shape-rendering="crispEdges" style="left:4px;top:4px"><path d="M2 0h1v5h-1zM1 1h1v3h-1zM0 2h1v1h-1z"/></svg></div>
<div class="sb" style="left:1172px;top:318px;width:15px;height:16px"><svg width="3" height="5" viewBox="0 0 3 5" shape-rendering="crispEdges" style="left:6px;top:4px"><path d="M0 0h1v5h-1zM1 1h1v3h-1zM2 2h1v1h-1z"/></svg></div>
<div class="sb" style="left:1157px;top:361px;width:15px;height:16px"><svg width="3" height="5" viewBox="0 0 3 5" shape-rendering="crispEdges" style="left:4px;top:4px"><path d="M2 0h1v5h-1zM1 1h1v3h-1zM0 2h1v1h-1z"/></svg></div>
<div class="sb" style="left:1172px;top:361px;width:14px;height:16px"><svg width="3" height="5" viewBox="0 0 3 5" shape-rendering="crispEdges" style="left:5px;top:4px"><path d="M0 0h1v5h-1zM1 1h1v3h-1zM2 2h1v1h-1z"/></svg></div>
<!-- status bar -->

<div class="pane" style="left:874px;width:71px"></div>
<div class="pane" style="left:947px;width:72px"></div>
<div class="pane" style="left:1022px;width:157px"></div>
<svg class="a" style="left:1184px;top:696px" width="13" height="13" viewBox="0 0 13 13"><path d="M12 1L1 12M12 5L5 12M12 9L9 12" stroke="#6b6b6d" stroke-width="1.500"/><path d="M12 0L0 12M12 4L4 12M12 8L8 12" stroke="#d0d0d2" stroke-width="1"/></svg>
<svg class="a" style="left:0;top:0" width="1201" height="713" viewBox="0 0 1201 713" font-family="Liberation Sans, sans-serif" font-size="11" fill="#000">
<text x="24" y="17" textLength="80.2" lengthAdjust="spacingAndGlyphs" font-weight="bold" fill="#fff">Untitled - Arta</text>
<text x="9.11765" y="36" textLength="15.6" lengthAdjust="spacingAndGlyphs" >File</text>
<text x="38" y="36" textLength="36.9" lengthAdjust="spacingAndGlyphs" >Overlay</text>
<text x="85.9444" y="36" textLength="20.0" lengthAdjust="spacingAndGlyphs" >Edit</text>
<text x="118" y="36" textLength="20.7" lengthAdjust="spacingAndGlyphs" >View</text>
<text x="150" y="36" textLength="45.2" lengthAdjust="spacingAndGlyphs" >Recorder</text>
<text x="207" y="36" textLength="48.5" lengthAdjust="spacingAndGlyphs" >Generator</text>
<text x="269" y="36" textLength="26.8" lengthAdjust="spacingAndGlyphs" >Setup</text>
<text x="308" y="36" textLength="24.7" lengthAdjust="spacingAndGlyphs" >Tools</text>
<text x="345.074" y="36" textLength="25.5" lengthAdjust="spacingAndGlyphs" >Mode</text>
<text x="382.045" y="36" textLength="21.6" lengthAdjust="spacingAndGlyphs" >Help</text>
<text x="12" y="85" textLength="17.8" lengthAdjust="spacingAndGlyphs" >Gen</text>
<text x="131.062" y="85" textLength="30.9" lengthAdjust="spacingAndGlyphs" >Fs(Hz)</text>
<text x="239.053" y="85" textLength="19.1" lengthAdjust="spacingAndGlyphs" >FFT</text>
<text x="336" y="85" textLength="21.6" lengthAdjust="spacingAndGlyphs" >Wnd</text>
<text x="451" y="85" textLength="17.8" lengthAdjust="spacingAndGlyphs" >Avg</text>
<text x="43" y="86" textLength="19.0" lengthAdjust="spacingAndGlyphs" >Sine</text>
<text x="172" y="86" textLength="28.6" lengthAdjust="spacingAndGlyphs" >96000</text>
<text x="268" y="86" textLength="36.7" lengthAdjust="spacingAndGlyphs" >131072</text>
<text x="367.05" y="86" textLength="38.9" lengthAdjust="spacingAndGlyphs" >Hanning</text>
<text x="480.033" y="86" textLength="29.6" lengthAdjust="spacingAndGlyphs" >Linear</text>
<text x="551.964" y="85" textLength="29.8" lengthAdjust="spacingAndGlyphs" >Reset</text>
<text x="1163" y="110" textLength="16.8" lengthAdjust="spacingAndGlyphs" >Top</text>
<text x="1163.92" y="176" textLength="13.3" lengthAdjust="spacingAndGlyphs" >Fit</text>
<text x="1156" y="207" textLength="32.4" lengthAdjust="spacingAndGlyphs" >Range</text>
<text x="1164" y="277" textLength="15.5" lengthAdjust="spacingAndGlyphs" >Set</text>
<text x="1156.03" y="310" textLength="32.0" lengthAdjust="spacingAndGlyphs" >FrHigh</text>
<text x="1159.07" y="355" textLength="28.5" lengthAdjust="spacingAndGlyphs" >FrLow</text>
<text x="5.03226" y="705" textLength="30.8" lengthAdjust="spacingAndGlyphs" >Ready</text>
<text x="877" y="705" textLength="47.7" lengthAdjust="spacingAndGlyphs" >L:-48.8dB</text>
<text x="952" y="705" textLength="49.5" lengthAdjust="spacingAndGlyphs" >R:-81.1dB</text>
<text x="1028" y="705" textLength="88.4" lengthAdjust="spacingAndGlyphs" >Spectrum Analyzer</text>
</svg>
</body></html>
